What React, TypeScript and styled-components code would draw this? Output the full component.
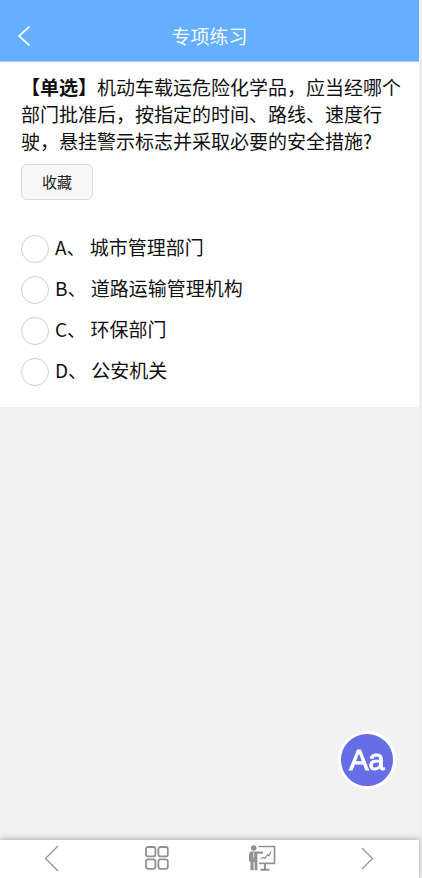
import React, { useState } from "react";
import styled, { createGlobalStyle } from "styled-components";

const GlobalStyle = createGlobalStyle`
  * { box-sizing: border-box; }
  body {
    margin: 0;
    background: #efeff0;
    color: #111;
    font-family: "Noto Sans CJK SC", sans-serif;
  }
  button { font-family: inherit; cursor: pointer; }
`;

const Page = styled.div`
  display: flex;
  flex-direction: column;
  min-height: 100vh;
  margin-right: 3px;
  background: #f2f2f2;
`;

const Header = styled.header`
  display: grid;
  grid-template-columns: 48px 1fr 48px;
  align-items: center;
  height: 62px;
  padding-top: 10px;
  background: #65afff;
  border-bottom: 1px solid #a9d0fb;
`;

const Title = styled.h1`
  margin: 0;
  color: #f4f9ff;
  font-size: 19px;
  font-weight: 400;
  line-height: 28px;
  text-align: center;
`;

const IconButton = styled.button`
  display: flex;
  align-items: center;
  justify-content: center;
  height: 36px;
  padding: 0;
  border: 0;
  background: none;
  color: #929292;
`;

const BackButton = styled(IconButton)`
  color: #f4f9ff;
`;

const Card = styled.main`
  padding: 11px 14px 21px 21px;
  background: #fff;
`;

const Question = styled.p`
  margin: 0;
  font-size: 19px;
  line-height: 27px;
`;

const FavoriteButton = styled.button`
  display: block;
  width: 72px;
  height: 36px;
  margin-top: 10px;
  padding: 0;
  border: 1px solid #dcdcdc;
  border-radius: 6px;
  background: #f7f7f7;
  color: #222;
  font-size: 15px;
  line-height: 24px;
`;

const Options = styled.fieldset`
  display: grid;
  gap: 13px;
  min-width: 0;
  margin: 35px 0 0;
  padding: 0;
  border: 0;
`;

const Option = styled.label`
  display: flex;
  align-items: center;
  gap: 6px;
  font-size: 19px;
  cursor: pointer;
`;

const OptionText = styled.span`
  padding-bottom: 4px;
  line-height: 24px;
  white-space: pre;
`;

const Radio = styled.input`
  appearance: none;
  flex: none;
  width: 28px;
  height: 28px;
  margin: 0;
  border: 1px solid #cfcfcf;
  border-radius: 50%;
  background: #fff;

  &:checked {
    border: 8px solid #65afff;
  }
`;

const FontSizeButton = styled.button`
  position: fixed;
  right: 26px;
  bottom: 89px;
  width: 58px;
  height: 58px;
  padding: 0;
  border: 3px solid #fff;
  border-radius: 50%;
  background: #656ee4;
  color: #fff;
  font-family: "Liberation Sans", sans-serif;
  font-size: 29px;
  -webkit-text-stroke: 1px #fff;
  line-height: 52px;
`;

const Footer = styled.nav`
  position: sticky;
  bottom: 0;
  display: grid;
  grid-template-columns: repeat(4, 1fr);
  height: 38px;
  margin-top: auto;
  background: #fff;
  box-shadow: 0 -1px 6px rgba(0, 0, 0, 0.3);
`;

const choices = [
  ["A", "城市管理部门"],
  ["B", "道路运输管理机构"],
  ["C", "环保部门"],
  ["D", "公安机关"],
];

const GridIcon = () => (
  <svg width="26" height="26" viewBox="0 0 26 26" fill="none" stroke="currentColor" strokeWidth="1.8">
    <rect x="2" y="2" width="9.4" height="9.4" rx="2" />
    <rect x="14.4" y="2" width="9.4" height="9.4" rx="2" />
    <rect x="2" y="14.4" width="9.4" height="9.4" rx="2" />
    <rect x="14.4" y="14.4" width="9.4" height="9.4" rx="2" />
  </svg>
);

const TeachIcon = () => (
  <svg width="28" height="28" viewBox="0 0 28 28" fill="none" stroke="currentColor">
    <circle cx="5.7" cy="4" r="2.8" fill="currentColor" stroke="none" />
    <path
      d="M2.8 7.5H15v2.2H9.4v16.6H6.6V18h-1v8.3H2.5V17.500H1V11Q1 8 2.8 7.500Z"
      fill="currentColor"
      stroke="none"
    />
    <path d="M5.7 8.500v5" stroke="#fff" strokeWidth="0.8" />
    <path d="M10.500 2.500H26.500V19.300H11" strokeWidth="1.7" />
    <path d="M17 19v6.500M12.500 25.700h9" strokeWidth="2" />
    <path d="m12.500 14.500 3-1 1.500 1 2.500-4 1.500 1.500L23 7.500" strokeWidth="1.2" />
  </svg>
);

export default function App() {
  const [selected, setSelected] = useState("");

  return (
    <>
      <GlobalStyle />
      <Page>
        <Header>
          <BackButton type="button" aria-label="返回">
            <svg width="14" height="22" viewBox="0 0 14 22" fill="none" stroke="currentColor" strokeWidth="1.7">
              <path d="M12.500 1.500 2 11l10.500 9.500" />
            </svg>
          </BackButton>
          <Title>专项练习</Title>
        </Header>
        <Card>
          <Question id="question">
            <strong>【单选】</strong>机动车载运危险化学品，应当经哪个部门批准后，按指定的时间、路线、速度行驶，悬挂警示标志并采取必要的安全措施?
          </Question>
          <FavoriteButton type="button">收藏</FavoriteButton>
          <Options aria-labelledby="question">
            {choices.map(([key, text]) => (
              <Option key={key}>
                <Radio
                  type="radio"
                  name="answer"
                  value={key}
                  checked={selected === key}
                  onChange={() => setSelected(key)}
                />
                <OptionText>{`${key}、 ${text}`}</OptionText>
              </Option>
            ))}
          </Options>
        </Card>
        <FontSizeButton type="button" aria-label="字体大小">Aa</FontSizeButton>
        <Footer>
          <IconButton type="button" aria-label="上一题">
            <svg width="16" height="28" viewBox="0 0 16 28" fill="none" stroke="currentColor" strokeWidth="1.3">
              <path d="M14 2 1.500 14.500 14 27" />
            </svg>
          </IconButton>
          <IconButton type="button" aria-label="答题卡"><GridIcon /></IconButton>
          <IconButton type="button" aria-label="讲解"><TeachIcon /></IconButton>
          <IconButton type="button" aria-label="下一题">
            <svg width="14" height="24" viewBox="0 0 14 24" fill="none" stroke="currentColor" strokeWidth="1.2">
              <path d="m2 2 10.500 10.500L2 23" />
            </svg>
          </IconButton>
        </Footer>
      </Page>
    </>
  );
}
